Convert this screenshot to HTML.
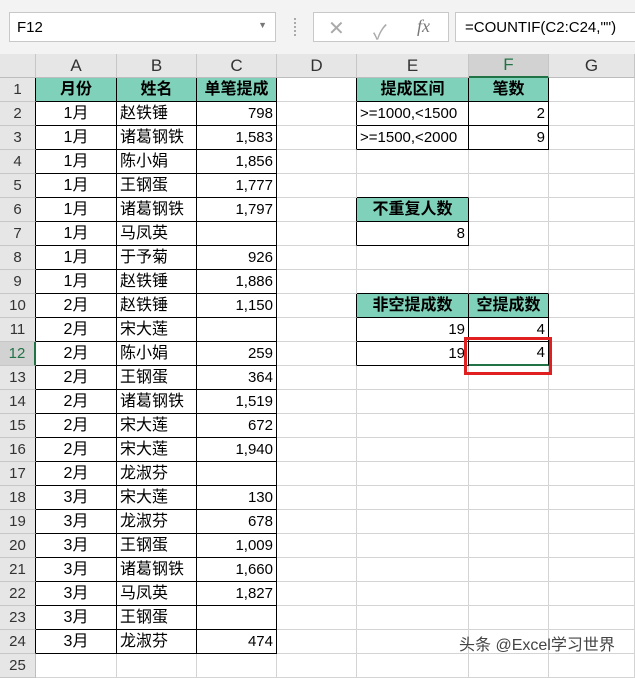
<!DOCTYPE html>
<html><head><meta charset="utf-8"><style>
*{margin:0;padding:0;box-sizing:border-box}
body{width:635px;height:664px;overflow:hidden;background:#fff;position:relative;font-family:"Liberation Sans","Noto Sans CJK SC",sans-serif;color:#000}
#top{position:absolute;left:0;top:0;width:635px;height:54px;background:#f3f3f3}
.box{position:absolute;background:#fff;border:1px solid #c8c8c8}
table{position:absolute;left:0;top:54px;border-collapse:separate;border-spacing:0;table-layout:fixed}
td{border-right:1px solid #d4d4d4;border-bottom:1px solid #d4d4d4;height:24px;font-size:15px;padding:0 3px;white-space:nowrap;overflow:hidden;line-height:22px}
tr.h td{height:23px;background:#e6e6e6;text-align:center;font-size:17px;color:#333;border-right-color:#c6c6c6;border-bottom-color:#bdbdbd}
td.rh{background:#e6e6e6;text-align:center;color:#333;font-size:15px;border-right-color:#bdbdbd;border-bottom-color:#c6c6c6;padding:0}
td.k{border-right-color:#000;border-bottom-color:#000}
td.kr{border-right-color:#000}
td.kb{border-bottom-color:#000}
td.g{background:#7fd1b9;font-weight:bold;text-align:center;font-size:16px}
td.c{text-align:center}
td.r{text-align:right}
td.cn{font-size:16px}
</style></head><body>
<div id="top">
<div class="box" style="left:9px;top:12px;width:267px;height:30px;font-size:15px;padding:6px 7px">F12<span style="position:absolute;right:8px;top:7px;font-size:9px;color:#777">▼</span></div>
<div style="position:absolute;left:294px;top:18px;width:2px;height:18px;border-left:2px dotted #aaa"></div>
<div class="box" style="left:313px;top:12px;width:136px;height:30px;color:#aaa">
<span style="position:absolute;left:14px;top:3px;font-size:20px">✕</span>
<span style="position:absolute;left:59px;top:3px;font-size:20px">✓</span>
<span style="position:absolute;left:103px;top:3px;font-size:18px;font-style:italic;font-family:'Liberation Serif',serif;color:#777">fx</span></div>
<div class="box" style="left:455px;top:12px;width:185px;height:30px;font-size:15px;padding:6px 9px">=COUNTIF(C2:C24,"")</div>
</div>
<table>
<colgroup><col style="width:36px"><col style="width:81px"><col style="width:80px"><col style="width:80px"><col style="width:80px"><col style="width:112px"><col style="width:80px"><col style="width:86px"></colgroup>
<tr class="h"><td style="background:#e6e6e6"></td><td class="kb">A</td><td class="kb">B</td><td class="kb">C</td><td>D</td><td class="kb">E</td><td class="kb" style="background:#d2d2d2;color:#217346;border-bottom:2px solid #217346">F</td><td>G</td></tr>
<tr><td class="rh kr">1</td><td class="k g">月份</td><td class="k g">姓名</td><td class="k g">单笔提成</td><td class="kr"></td><td class="k g">提成区间</td><td class="k g">笔数</td><td></td></tr>
<tr><td class="rh kr">2</td><td class="k c cn">1月</td><td class="k cn">赵铁锤</td><td class="k r">798</td><td class="kr"></td><td class="k">&gt;=1000,&lt;1500</td><td class="k r">2</td><td></td></tr>
<tr><td class="rh kr">3</td><td class="k c cn">1月</td><td class="k cn">诸葛钢铁</td><td class="k r">1,583</td><td class="kr"></td><td class="k">&gt;=1500,&lt;2000</td><td class="k r">9</td><td></td></tr>
<tr><td class="rh kr">4</td><td class="k c cn">1月</td><td class="k cn">陈小娟</td><td class="k r">1,856</td><td></td><td></td><td></td><td></td></tr>
<tr><td class="rh kr">5</td><td class="k c cn">1月</td><td class="k cn">王钢蛋</td><td class="k r">1,777</td><td></td><td class="kb"></td><td></td><td></td></tr>
<tr><td class="rh kr">6</td><td class="k c cn">1月</td><td class="k cn">诸葛钢铁</td><td class="k r">1,797</td><td class="kr"></td><td class="k g">不重复人数</td><td></td><td></td></tr>
<tr><td class="rh kr">7</td><td class="k c cn">1月</td><td class="k cn">马凤英</td><td class="k r"></td><td class="kr"></td><td class="k r">8</td><td></td><td></td></tr>
<tr><td class="rh kr">8</td><td class="k c cn">1月</td><td class="k cn">于予菊</td><td class="k r">926</td><td></td><td></td><td></td><td></td></tr>
<tr><td class="rh kr">9</td><td class="k c cn">1月</td><td class="k cn">赵铁锤</td><td class="k r">1,886</td><td></td><td class="kb"></td><td class="kb"></td><td></td></tr>
<tr><td class="rh kr">10</td><td class="k c cn">2月</td><td class="k cn">赵铁锤</td><td class="k r">1,150</td><td class="kr"></td><td class="k g">非空提成数</td><td class="k g">空提成数</td><td></td></tr>
<tr><td class="rh kr">11</td><td class="k c cn">2月</td><td class="k cn">宋大莲</td><td class="k r"></td><td class="kr"></td><td class="k r">19</td><td class="k r">4</td><td></td></tr>
<tr><td class="rh" style="background:#d2d2d2;color:#217346;border-right:2px solid #217346">12</td><td class="k c cn">2月</td><td class="k cn">陈小娟</td><td class="k r">259</td><td class="kr"></td><td class="k r">19</td><td class="k r" style="border-bottom:2px solid #217346">4</td><td></td></tr>
<tr><td class="rh kr">13</td><td class="k c cn">2月</td><td class="k cn">王钢蛋</td><td class="k r">364</td><td></td><td></td><td></td><td></td></tr>
<tr><td class="rh kr">14</td><td class="k c cn">2月</td><td class="k cn">诸葛钢铁</td><td class="k r">1,519</td><td></td><td></td><td></td><td></td></tr>
<tr><td class="rh kr">15</td><td class="k c cn">2月</td><td class="k cn">宋大莲</td><td class="k r">672</td><td></td><td></td><td></td><td></td></tr>
<tr><td class="rh kr">16</td><td class="k c cn">2月</td><td class="k cn">宋大莲</td><td class="k r">1,940</td><td></td><td></td><td></td><td></td></tr>
<tr><td class="rh kr">17</td><td class="k c cn">2月</td><td class="k cn">龙淑芬</td><td class="k r"></td><td></td><td></td><td></td><td></td></tr>
<tr><td class="rh kr">18</td><td class="k c cn">3月</td><td class="k cn">宋大莲</td><td class="k r">130</td><td></td><td></td><td></td><td></td></tr>
<tr><td class="rh kr">19</td><td class="k c cn">3月</td><td class="k cn">龙淑芬</td><td class="k r">678</td><td></td><td></td><td></td><td></td></tr>
<tr><td class="rh kr">20</td><td class="k c cn">3月</td><td class="k cn">王钢蛋</td><td class="k r">1,009</td><td></td><td></td><td></td><td></td></tr>
<tr><td class="rh kr">21</td><td class="k c cn">3月</td><td class="k cn">诸葛钢铁</td><td class="k r">1,660</td><td></td><td></td><td></td><td></td></tr>
<tr><td class="rh kr">22</td><td class="k c cn">3月</td><td class="k cn">马凤英</td><td class="k r">1,827</td><td></td><td></td><td></td><td></td></tr>
<tr><td class="rh kr">23</td><td class="k c cn">3月</td><td class="k cn">王钢蛋</td><td class="k r"></td><td></td><td></td><td></td><td></td></tr>
<tr><td class="rh kr">24</td><td class="k c cn">3月</td><td class="k cn">龙淑芬</td><td class="k r">474</td><td></td><td></td><td></td><td></td></tr>
<tr><td class="rh">25</td><td></td><td></td><td></td><td></td><td></td><td></td><td></td></tr>
</table>
<div style="position:absolute;left:459px;top:631px;font-size:16px;color:#444">头条 @Excel学习世界</div>
<div style="position:absolute;left:464px;top:337px;width:88px;height:38px;border:3px solid #e02020"></div>
</body></html>
